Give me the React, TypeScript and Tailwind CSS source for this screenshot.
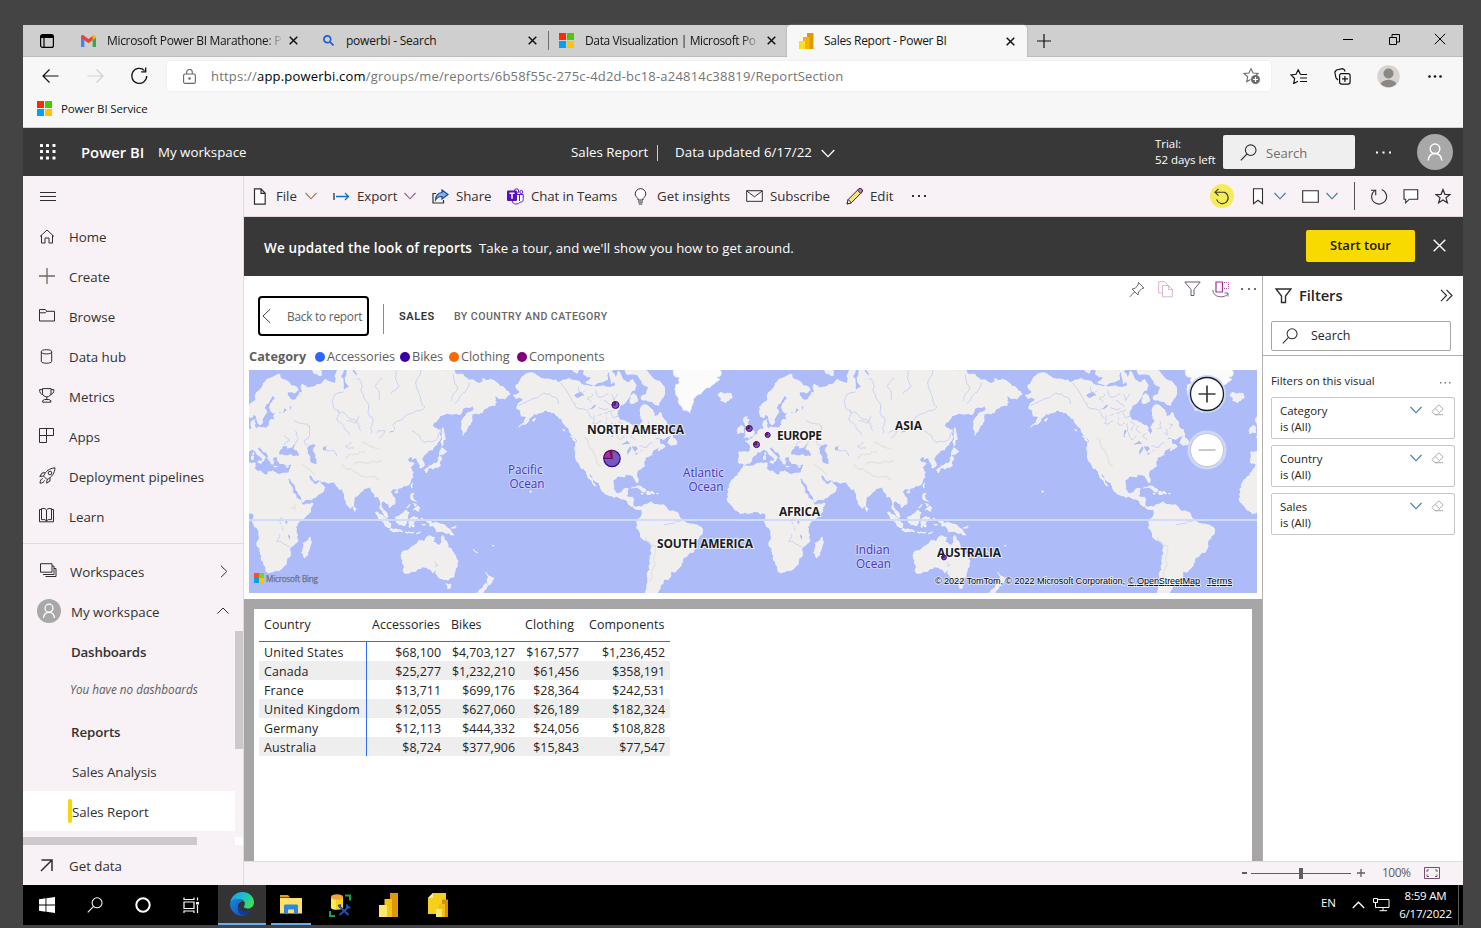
import React from "react";

type Pt = [number, number];

/* ---------- world map data: lon, lat pairs ---------- */
const AFRICA = [-5.9,35.8,-2,35.2,3,36.8,10,37.3,11,36.8,10.6,35.5,10.1,34,11.2,33.2,15,32.3,15.5,31.4,19,30.3,20,31,20,32.3,23,32.7,25,31.6,29,30.9,31,31.5,32.5,31.2,32.6,30,34,27,35.5,24,37.3,21,37.2,19,38.5,18,39.5,15.5,41.2,14.5,43.2,12,43.2,11.3,44.5,10.5,47.5,11.2,51.2,11.9,51,10.4,49.5,7,48,4.3,45.8,2,42,-1,40.3,-2.6,39,-5,39.5,-7,40.5,-10.5,40.6,-15,37,-17.8,34.9,-19.9,35.5,-22,35.5,-24,32.8,-25.8,32.5,-28.5,30.5,-31,27,-33.6,24,-34,20,-34.8,18.4,-34.2,18,-32,16.5,-28.7,15,-26.5,14.4,-22.5,12,-18,11.8,-16,13.6,-12.5,13.2,-9,12.3,-6,9.5,-2.5,8.8,-0.7,9.5,1,9.8,3.2,8.6,4.8,6,4.3,4.3,6.3,1,5.9,-2,4.8,-4.5,5.2,-7.6,4.4,-10,6,-13,8.3,-13.7,9.8,-15,11,-16.7,12.4,-17.4,14.7,-16.4,16,-16.3,19,-17,21,-16,23.7,-14.8,26,-13,27.8,-10,29.5,-9.7,31.3,-8,33.3,-6.8,34.2];
const EURASIA = [-9,43.2,-8.8,41,-9.4,38.7,-8.9,37,-6.5,37,-5.5,36.1,-2,36.8,0,38.8,-0.3,39.6,1,41,3.2,42.2,3.2,43.2,6,43.1,8.8,44.4,10.2,43.8,12.3,41.7,15,40.2,16,38.8,15.7,38,17,39,17,40.4,18.5,40,16,41.8,13.6,43.6,12.4,44.7,13.5,45.7,14.5,45,16,43.5,19.3,42,19.5,40,21,38.3,21.8,36.8,23,36.5,24,38,22.8,39.3,23.5,40.2,26,40.8,26.2,39.5,26.8,38,28,36.8,30.6,36.8,32,36.1,34,36.3,36,36.8,35.8,35,34.9,32.8,34.2,31.3,32.5,31.2,32.6,29.9,34.2,27.8,34.9,29.4,35,28,37.2,25,39,22,40.5,19.8,42.7,16.5,43.4,12.7,45,12.9,49,14.2,52,15.6,55,17.5,57.8,19,59.8,22.4,58.5,23.7,56.3,25,56.3,26.2,54,24.2,51.6,24.3,51.3,26,50.2,25.7,50,26.7,48.3,29,48.5,30,50,30.2,51.5,27.9,54,26.6,56.8,27,57.5,25.7,61.5,25.1,66.6,25.2,67.5,23.8,70,22.5,69,22.2,70.3,20.8,72.5,21.3,72.8,19,73.5,16,74.8,13,76.3,9.8,77.5,8.1,78.2,9,79.8,10.3,80.2,13.3,80.2,15.5,82.3,16.7,85,19.5,87,21.4,90,22,91.8,22.4,92.3,20.7,94.3,18.5,94.4,16,96,16.2,97.6,16.5,98.6,13,98.5,10,98.3,8,100.3,6.2,101.5,2.8,103.5,1.3,103.4,4,102.2,6.2,100.4,7.3,99.3,9.3,100,12.5,100.8,13.4,102.3,12.2,104.8,10.4,104.9,8.7,106.7,10.4,109.2,11.8,109,13.5,107.3,16.7,105.8,19,106.7,20.7,108.3,21.6,110,21.3,110.5,20.4,110.5,21.3,113.5,22.2,116.7,23.3,119.5,25.5,121.8,29,121,30.6,121.8,31.7,120.5,34,119.3,35,122.4,37,120.8,37.8,118.8,37.5,117.7,39,121,40.8,121.3,39,124.3,40,125,38,126.5,36.5,126.4,34.5,129.2,35.2,129.4,37,127.5,39.5,130,42,132,43.2,135.5,44.2,138.5,46.8,140.4,49,140.5,52,141.2,53.2,137.5,54,135.3,54.8,139,57.5,143,59.3,149,59.5,155,59.4,157,61.6,160.3,61.8,164,62.5,163.5,60.5,160,60,157,58,155.7,56.8,155.7,54,156.7,51,158.5,52.5,160,54.5,162,55.5,163,57.8,163,59.5,166,60,170.3,60,173,61.5,177.5,62.5,179.3,62.4,179.5,64.5,178,66,181,65,186,64.5,190,66,187,67,182,68.5,180,69,176,69.8,170.5,70,170,69,161,69.6,160,70,152,71,150,72,140,72.5,140,76,100,78,85,74,80,73.5,80.5,72.2,82,70.5,79,72,75,72.8,74.5,69,77,68,73,67,72.5,69,72.7,72,70,73,66.8,70.5,67.5,68.7,65,69,60.5,69.8,54,68.5,48,67.6,46.2,68.2,43.5,68.6,44,66.2,42,66.5,40,65,37,64,34.9,64.5,33,66.7,38,66.2,41,67,40,67.8,33.5,69.4,30,69.7,28,71,23,70.3,18,69.3,14.5,67.3,11,64.7,9,63.5,5.3,62,5.2,60,5.8,58.7,8,58.1,10.5,59.2,11.3,58.8,12.7,56,14.2,55.5,16,56.5,16.8,58.5,18.8,60,17.2,61.5,18,62.8,21.5,64.4,22.3,65.7,25,65,21.5,63,21.4,61,23,59.9,28.5,60.5,29.5,59.9,24,59.4,23.7,58.5,24.3,57.3,21.7,57.5,21,55.5,19.5,54.4,16,54.3,12.5,54.4,11,54,10.8,56,10.5,57.6,8.3,57,8.4,54.5,8,53.7,5,53.3,4,51.8,1.7,50.8,0,49.5,-1.7,49.6,-1.5,48.6,-4.7,48.5,-2.5,47.3,-1.2,46,-1.4,43.5];
const N_AMERICA = [-168,65.6,-163,66.5,-166,68.4,-163,69.5,-156.5,71.3,-150,70.5,-141,69.7,-136,69,-129,70,-124,69.5,-115,68.2,-108,68,-102,67.8,-96,68.2,-94,71.8,-90,69.5,-86,69,-84,69.8,-81.5,68.2,-85,66.5,-88,64.2,-93,62,-94.7,59,-92.5,57.2,-88,56.5,-82.5,55.2,-82,53,-80,51.3,-79,52,-79.5,54.6,-76.6,57.2,-78.5,59,-77.5,62.3,-73,62.3,-70,61,-69,58.8,-66,58.8,-64.5,60.2,-62,57.5,-60,55,-56.5,53.5,-56,52,-60,50.2,-66.5,50.2,-69,48.5,-65,49.2,-64.5,47,-61,45.8,-63,44.7,-66,43.6,-65,45.3,-67.5,44.8,-70,43.6,-70.8,42.2,-70,41.6,-74,40.6,-75.3,38.5,-76,37,-75.6,35.3,-78,33.9,-81,32,-81.4,30.2,-80.1,26.8,-80.5,25.2,-81.8,26.2,-82.7,28,-84,30,-87,30.4,-89.5,30.2,-89.3,29.1,-91.5,29.4,-94.5,29.5,-97.3,27.5,-97.6,24,-97.4,21.5,-96,19,-94,18.1,-91.5,18.6,-90.4,21,-87,21.5,-87.6,19,-88.5,16,-84,15.8,-83.3,14.5,-83.7,11,-82,9,-79.6,9.6,-77.3,8.6,-78,7.6,-80.3,7.3,-82.8,8.2,-85.6,10,-87.5,13,-92,14.5,-94.5,16.2,-99,16.7,-103.5,18.3,-105.6,20.5,-106.5,23,-109.3,26,-112.4,29.5,-114.7,31.7,-113,28.5,-110.3,24.2,-109.6,23.1,-112.2,25,-114.5,27.8,-116,30.3,-117.3,33,-120.5,34.5,-122.4,37.5,-124.2,40.4,-124.2,43.5,-124.2,47.5,-122.5,48.3,-125,50.2,-128,52.3,-130.5,54.6,-133.5,57.8,-137,58.8,-141,60,-146,60.8,-149,60,-152,59.2,-151,61.2,-154,59,-158.5,56,-164,54.6,-160,56.2,-157.5,58.7,-162,58.7,-165.5,61.5,-164.5,63,-161,63.8,-161,64.8,-166,64.6];
const S_AMERICA = [-77.3,8.6,-75.5,10.7,-73,11.3,-71.6,12.4,-70,12,-68,10.6,-64,10.5,-62,10.6,-60,8.5,-57,6,-54,5.8,-51.5,4.3,-50,1,-48,-0.8,-44.5,-2.6,-41,-2.9,-37.5,-4.5,-35.2,-5.6,-34.9,-8,-37.2,-11.5,-39,-14,-39.2,-17.8,-41,-22,-44.5,-23.1,-48.2,-25.6,-48.8,-28.5,-51.5,-31.8,-54,-34.5,-57.5,-34.6,-57,-36.5,-59,-38.7,-62.2,-39,-62.5,-40.8,-65,-41,-64.5,-43,-67,-45.8,-66,-48,-68,-51,-74,-51,-75.5,-46.5,-74,-42,-73.3,-38,-71.6,-33,-71.5,-29,-70.3,-23,-70.3,-18.5,-76,-14,-79,-8.2,-81.2,-5.6,-80.2,-3.3,-81,-2.2,-80,0.7,-78,2.3,-77.3,4.3,-77.5,6.8];
const GREENLAND = [-43.5,60,-48.5,60.8,-50.5,62.5,-52,65,-53.7,66.8,-53.5,68.5,-51,69,-51,70.2,-54.5,70.6,-55,72,-58,74,-60,76,-20,76,-20,73,-22,72.3,-22.5,70.5,-25,70.3,-22.5,69.8,-27,68.6,-33,67.3,-36,65.9,-39.5,65.4,-41,63.5,-42.6,61.8];
const AUSTRALIA = [114,-22,113.5,-26,115.7,-31.5,115,-34.2,118,-35,123.5,-33.9,126,-32.3,131,-31.5,134,-33,135.6,-34.9,137.8,-32.7,138,-35.6,140.5,-38,144,-38.5,146.4,-39,150,-37.4,151.2,-34,153,-31,153.3,-27.5,150.8,-23.5,148.8,-20.2,146,-18.8,145.4,-15,143.7,-14.2,142.5,-10.8,141.6,-13,140.8,-17.4,139,-17.3,135.5,-15,136.8,-12.2,132.5,-11.3,130.7,-12.5,129.5,-15,126,-14,123.7,-17,122,-18.2,119,-20];
const ISLANDS: number[][] = [
  [-5.5,50.1,1,51,1.6,52.7,0,53.2,-1.5,55,-3,56,-2,57.5,-4,57.8,-3.2,58.6,-5,58.5,-6,57,-5,55.5,-3,54.9,-3,53.5,-4.5,53.2,-4.5,52,-5,51.7,-3,51.4],
  [-6,52.2,-10,51.7,-10,54,-7.5,55.2,-5.7,54.5],
  [-22,64,-18.5,63.4,-14,64.8,-15,66.2,-20,66,-22.5,66.4,-24,65.5,-22,65],
  [49.3,-12,50.5,-15.5,49.3,-18,47.5,-24,45,-25.5,43.3,-22.5,44.4,-19.5,44.3,-16.3,47,-15],
  [79.8,9.7,81.8,7.5,80.6,6,79.8,7.5],
  [95.3,5.6,98,4.2,101,2,104,-1,106,-3,105.8,-5.8,102,-4,99,0,97,3],
  [105.2,-6.7,108.5,-6.6,112.6,-6.8,114.5,-8.4,110,-8.2,106.5,-7.4],
  [116,-8.4,119,-8.4,122.5,-8.5,120,-9,117,-9],[124,-9.5,127,-8.5,125,-9.7],[127.8,-3,130.5,-3.2,129,-3.6],[127.5,1.5,128.5,1,128,-0.5],
  [109,1.8,111.5,2.5,115,5.2,117,7,119,5.2,117.8,3,117.5,0.8,116,-3.8,112,-3.4,110,-1.6],
  [119,-1,120,1.2,125,1.6,120.5,0.5,121,-1,123,-1,121.5,-2,122.5,-4.8,121,-4.5,120.4,-3,119.5,-5.4],
  [120.5,18.4,122.2,18.4,121.6,15.8,124,13,121,13.7,120,16],
  [125,10,126.4,8,125.5,6,123.5,7.5,122,7],[122,11.5,124,11,123,9.5],[117.2,8.4,119.5,11,118.5,10],
  [131,-1,134,-0.8,135,-3.3,138,-1.6,142,-3,146,-5.6,150.5,-10.4,146.5,-9,143,-8.2,138,-8.3,137.5,-5.3,133,-4,134,-2.5],
  [148.3,-5.7,152,-4.2,151,-5.8],
  [144.8,-40.8,148.2,-41,147.8,-43.2,146,-43.4],
  [172.8,-34.5,175.5,-36.8,178.4,-37.8,176.5,-40.5,175,-41.5,173.8,-39.2,174.7,-37.5],
  [172.7,-40.6,174.2,-41.8,172.5,-43.8,170.5,-46,168,-46.5,166.5,-45.8,169,-43.8,171.3,-42],
  [129.7,33,131,34.2,134,35.6,136.7,37,139.5,38.5,140.2,41.2,141.8,39.8,140.9,36,138.5,34.7,135.7,33.6,134,34.5,132,33.8,131,31.4],
  [140.2,41.8,141.7,45.3,145.2,43.5,143,42],
  [142,46,143,49,144.5,49.3,143,52.5,142.7,54.3,142,52,142,49],
  [120.2,23,121.5,25.2,121,22],
  [108.7,19.3,110.8,20,109.8,18.4],
  [12.5,38,15.6,38.2,15,36.8],
  [8.3,39,8.3,41,9.7,41,9.5,39.2],[8.7,41.6,9.4,43,9.5,41.6],
  [23.6,35.4,26.3,35.2,24.5,35],[32.4,35,34.4,35.6,33.5,34.7],
  [52,71.2,57,70.7,55.5,73.5,52,73],
  [-84.8,21.9,-81,23.1,-77,21.8,-74.3,20.2,-77.6,19.9,-79,21.4,-82,22.5],
  [-74.3,18.4,-73,19.9,-69.8,19.7,-68.5,18.4,-71.5,17.8],
  [-78.2,18.4,-76.3,18.1,-77.3,17.8],[-67.2,18.4,-65.7,18.3,-66.5,18],
  [-59.2,47.7,-57.5,50.2,-55.7,51.6,-55.5,49.7,-53,48,-53.6,46.7],
  [-128,50.7,-125,49.7,-123.5,48.4,-125.5,48.8],
  [-132.5,53.8,-131.8,52.8,-133,53.4],
  [-61.5,66.7,-65,63.5,-65.5,62.5,-71.5,63.8,-78,64.5,-74,66,-73,68,-79,70,-88,71,-90,73.5,-80,74,-74,71.8,-67.5,69.5],
  [-86,64.2,-83,66,-80.5,63.8,-85,63],
  [-117,69,-105,69.2,-101.5,69.8,-105,73,-115,73.3,-118.5,71,-113,70.3],
  [-126,72,-123,71.2,-118,73,-124,74.5],
  [-99,68.8,-96,70,-99,71.5,-97,74,-102,73,-100,70.5],
  [-154.5,57.3,-152.3,58,-153.5,56.8],
  [-64.2,49.8,-62,49.2,-63,49.5],
  [-156,20.2,-155,19.6,-155.8,19],
  [164.2,-20.2,167,-22.3,165.2,-21.5],
  [178,-17.4,178.7,-17.9,177.5,-18],
];
const WATERS: number[][] = [
  [28,41.5,28,43.5,30.5,46,33,46,33.5,44.6,36.5,45.3,39,47,37.5,44.7,41.5,42,41,41,38,41,35,42,31.5,41.3],
  [47,45,51,46.8,53,46.5,51,44.5,53,41.5,53.8,39,54,37,50,37.3,49,39,49.5,40.5,47.5,43],
  [58.5,45.5,61,46.5,61,44,58.8,43.8],
  [104,51.5,107,52.4,109.7,55.6,108,53],
  [-92,46.8,-88,48.7,-84.7,46.8,-88,46.9],
  [-87.8,42,-87,44.5,-85,46,-86.2,43,-87,41.7],
  [-84,46,-81,45.8,-80,44.6,-82,43.2,-83.5,44.5],
  [-83,41.8,-79,42.8,-81,41.8],[-79.5,43.3,-76.4,44,-78,43.6],
  [-99,50.5,-97,53.5,-98.5,53,-97.5,50.5],
  [-117,61.3,-109.5,62.8,-113,61.2],[-125,65.5,-121,66.6,-118,65.5,-123,64.8],
  [31.8,0,34,0.3,33.5,-2.5,32,-2.2],[29.2,-4,30,-6,31,-8.5,29.6,-6],[34,-10,35,-14,34.3,-12.5],
  [30.5,60,33,61,31,61.5],[35,61,36,62.3,34.7,62],
  [-102,57,-102.6,58.5,-102,58],[-109,59,-105,59.4,-107,59.1],
];
const RIVERS: number[][] = [
  [73,66.5,66,65,67,61,70,60,75,59,82,57,85,53],
  [69,61,68,58,73,55,77,51],
  [82,70,86,68,87,65,90,60,93,56,92,52],
  [127,72,124,68,127,64,130,62,122,60,115,58,107,55],
  [141,53,135,48,130,48,127,50,121,53],
  [48,46,45,48.5,49,52,49,55,44,56,38,57],
  [39,47,41,49,39,53],[31,46.5,35,48.5,31,51],
  [150,71,153,68,149,64],[161,69,156,66,151,63],
  [-135,69,-129,66,-124,62,-117,61,-112,58],
  [-164,62.5,-157,64,-150,65.2,-142,66,-136,63],
  [28,-10,26,-15,30,-16,35,-18.5],[29,-3,28,-1,30,2],
  [-50,-0.5,-55,-2.3,-62,-3],
  [137,-28,139,-30,137,-31],
  [-94,66,-97,64,-99,66],[-93,60,-97,58,-99,60],[-101,66,-108,65,-110,67],[-106,57,-112,56,-111,59],[-90,51,-93,49,-95,52,-96,56],
  [-104,64,-101,63,-98,62],[-112,66,-116,64.5,-113,63.5],[-98,56,-101,55,-103,56.5],[-87,52,-90,53.5,-88,55],
  [-108,62,-104,61,-101,61.5],[-117,67,-120,66,-122,68],[-97,61,-100,60.5,-104,60],[-93,53,-91,55.5,-94,57],[-82,49,-85,50.5,-83,52],
  [-75,54,-72,54,-73,57],[-79,46,-74,45.5,-70,47.5],[-66,54,-64,55.5,-67,56],[-70,52,-68,51,-69,54],
  [80,45,74,46,78,48],[60,44,66,44,68,41],[75,57,81,56,84,59],[96,52,102,53,98,50],
  [110,72,112,68,106,66],[100,70,95,68,98,64],
];
const RIDGES: number[][] = [
  [71,37,78,34,83,31,88,29,95,29.5,98,27],[80,36,87,37,93,38,100,38],[74,40,81,42,88,43],[86,48,92,46,98,45],
  [-72,-40,-70,-33,-69,-25,-68,-18,-75,-12],[-118,50,-114,45,-110,40,-106,35],[36,9,39,7,38,12],[44,37,48,34,53,30],
];

const LON = 512 / 360;
/* Web-mercator projection into map-panel pixels. */
function project(lon: number, lat: number): Pt {
  const r = (lat * Math.PI) / 180;
  return [503 + lon * LON, 150 - 81.49 * Math.log(Math.tan(Math.PI / 4 + r / 2))];
}
function toPoints(flat: number[]): Pt[] {
  const out: Pt[] = [];
  for (let i = 0; i < flat.length; i += 2) out.push(project(flat[i], flat[i + 1]));
  return out;
}
function noise(x: number, y: number) {
  const s = Math.sin(x * 12.9898 + y * 78.233) * 43758.5453;
  return s - Math.floor(s) - 0.5;
}
/* Adds small coastline irregularity by midpoint displacement. */
function roughen(pts: Pt[], closed: boolean): Pt[] {
  const out: Pt[] = [];
  const n = closed ? pts.length : pts.length - 1;
  for (let i = 0; i < n; i++) {
    const a = pts[i];
    const b = pts[(i + 1) % pts.length];
    const dx = b[0] - a[0];
    const dy = b[1] - a[1];
    const len = Math.hypot(dx, dy);
    out.push(a);
    if (len > 2 && len < 30) {
      const k = noise(a[0], b[1]) * 0.42;
      out.push([a[0] + dx / 2 - dy * k, a[1] + dy / 2 + dx * k]);
    }
  }
  if (!closed) out.push(pts[pts.length - 1]);
  return out;
}
function path(flat: number[], closed = true) {
  let pts = roughen(toPoints(flat), closed);
  pts = roughen(pts, closed);
  return "M" + pts.map((p) => p[0].toFixed(1) + " " + p[1].toFixed(1)).join("L") + (closed ? "Z" : "");
}
const LAND_D = [AFRICA, EURASIA, N_AMERICA, S_AMERICA, AUSTRALIA, ...ISLANDS].map((p) => path(p)).join("");
const ICE_D = path(GREENLAND);
const WATER_D = WATERS.map((p) => path(p)).join("");
const RIVER_D = RIVERS.map((p) => path(p, false)).join("");
const RIDGE_D = RIDGES.map((p) => path(p, false)).join("");

function Pie({ x, y, r }: { x: number; y: number; r: number }) {
  const at = (deg: number) => {
    const t = (deg * Math.PI) / 180;
    return `${(x + r * Math.sin(t)).toFixed(2)} ${(y - r * Math.cos(t)).toFixed(2)}`;
  };
  return (
    <g stroke="#3a0a86" strokeWidth={r > 5 ? 1.2 : 1}>
      <circle cx={x} cy={y} r={r} fill="#7558c4" />
      <path d={`M${x} ${y}L${at(272)}A${r} ${r} 0 0 1 ${at(346)}Z`} fill="#ad2bab" stroke="#5a0a5e" />
      <path d={`M${x} ${y}L${at(346)}A${r} ${r} 0 0 1 ${at(358)}Z`} fill="#c8502a" stroke="#7a1030" />
    </g>
  );
}

function MapLabel({ x, y, w, children }: { x: number; y: number; w: number; children: string }) {
  return (
    <text x={x} y={y} textLength={w} className="fill-[#1c1c24] stroke-white/70 text-[12px] font-bold [paint-order:stroke]" strokeWidth={2.2}>
      {children}
    </text>
  );
}
function OceanLabel({ x, x2, y, name }: { x: number; x2: number; y: number; name: string }) {
  return (
    <text className="fill-[#4836c4] stroke-[#cdd6fb]/80 text-[11.700px] [paint-order:stroke]" strokeWidth={2}>
      <tspan x={x} y={y}>{name}</tspan>
      <tspan x={x2} y={y + 14}>Ocean</tspan>
    </text>
  );
}

function WorldMap() {
  return (
    <div className="relative h-[223px] w-[1008px] overflow-hidden">
      <svg width="1008" height="223" viewBox="0 0 1008 223" className="block">
        <rect width="1008" height="223" fill="#adbcf8" />
        {[-512, 0, 512].map((dx) => (
          <g key={dx} transform={`translate(${dx} 0)`}>
            <path d={LAND_D} fill="#f0efee" stroke="#f6f6fa" strokeWidth="0.8" />
            <path d={ICE_D} fill="#fbfbfc" stroke="#f0f3fd" strokeWidth="0.8" />
            <path d={RIDGE_D} fill="none" stroke="#e7e4e0" strokeWidth="1.600" />
            <path d={WATER_D} fill="#adbcf8" />
            <path d={RIVER_D} fill="none" stroke="#c0caf5" strokeWidth="0.8" />
          </g>
        ))}
        <rect y="149" width="1008" height="2" fill="#cfdcfb" />
        <MapLabel x={338} y={64} w={97}>NORTH AMERICA</MapLabel>
        <MapLabel x={528} y={70} w={45}>EUROPE</MapLabel>
        <MapLabel x={646} y={60} w={27}>ASIA</MapLabel>
        <MapLabel x={530} y={146} w={41}>AFRICA</MapLabel>
        <MapLabel x={408} y={178} w={96}>SOUTH AMERICA</MapLabel>
        <MapLabel x={688} y={187} w={64}>AUSTRALIA</MapLabel>
        <OceanLabel x={259} x2={260.500} y={104} name="Pacific" />
        <OceanLabel x={434} x2={439.500} y={107} name="Atlantic" />
        <OceanLabel x={606.500} x2={607} y={184} name="Indian" />
        <Pie x={363} y={88.500} r={8.200} />
        <Pie x={366.500} y={35} r={3.500} />
        <Pie x={500.300} y={58.500} r={3} />
        <Pie x={518.700} y={65} r={2.500} />
        <Pie x={507.500} y={74.600} r={3} />
        <Pie x={695} y={187.500} r={2.400} />
        <rect x="5" y="203" width="5" height="5" fill="#f65314" />
        <rect x="10" y="203" width="5" height="5" fill="#6fd531" />
        <rect x="5" y="208" width="5" height="5" fill="#00a1f1" />
        <rect x="10" y="208" width="5" height="5" fill="#ffc400" />
        <text x="17" y="211.500" textLength="52" className="fill-[#6f7179] text-[8.200px]" stroke="#6f7179" strokeWidth="0.25">Microsoft Bing</text>
        <g className="fill-black stroke-white/70 font-['Liberation_Sans',Arial,sans-serif] text-[9.200px] [paint-order:stroke]" strokeWidth={1.5}>
          <text x="686" y="214" textLength="190">© 2022 TomTom, © 2022 Microsoft Corporation,</text>
          <text x="879" y="214" textLength="72" textDecoration="underline">© OpenStreetMap</text>
          <text x="958" y="214" textLength="25" textDecoration="underline">Terms</text>
        </g>
        <circle cx="958" cy="24" r="19" fill="#ccd8fb" />
        <circle cx="958" cy="24" r="16.500" fill="#fff" stroke="#1b1b1b" strokeWidth="1.300" />
        <path d="M949.500 24h17M958 15.500v17" stroke="#3b3b3b" strokeWidth="1.700" />
        <circle cx="958" cy="80" r="19.500" fill="#ccd8fb" />
        <circle cx="958" cy="80" r="16.500" fill="#fff" stroke="#c8c4c4" strokeWidth="1" />
        <path d="M949.500 80h17" stroke="#b9b7b7" strokeWidth="1.500" />
      </svg>
    </div>
  );
}

/* ---------- icons ---------- */
function Icon({ w, h, c = "#2f2e2d", sw = 1, children, className = "" }: { w: number; h: number; c?: string; sw?: number; children: React.ReactNode; className?: string }) {
  return (
    <svg width={w} height={h} viewBox={`0 0 ${w} ${h}`} fill="none" stroke={c} strokeWidth={sw} className={"block shrink-0 " + className}>
      {children}
    </svg>
  );
}
const ChevronDown = ({ c = "#6b6360" }: { c?: string }) => (
  <Icon w={12} h={8} c={c} sw={1.100}><path d="M.5 1 6 6.800 11.500 1" /></Icon>
);
const MsLogo = () => (
  <svg width="15" height="15" viewBox="0 0 15 15" className="block shrink-0">
    <path fill="#fe2a00" d="M0 0h7v7H0z" /><path fill="#4dc900" d="M8 0h7v7H8z" />
    <path fill="#00a2f8" d="M0 8h7v7H0z" /><path fill="#ffc400" d="M8 8h7v7H8z" />
  </svg>
);
const CloseX = () => <Icon w={9} h={9} c="#111" sw={1.500}><path d="M.7.7l7.600 7.600M8.300.7.7 8.300" /></Icon>;
const Person = ({ small = false }: { small?: boolean }) => (
  <svg width={small ? 24 : 36} height={small ? 24 : 36} viewBox={small ? "0 0 24 24" : "0 0 36 36"} className="block shrink-0">
    {small ? (
      <><circle cx="12" cy="12" r="12" fill="#a8a8a8" /><g fill="none" stroke="#fff" strokeWidth="1.200"><circle cx="12" cy="9.200" r="4" /><path d="M6.500 19c.3-3.600 2.400-5.700 5.500-5.700s5.200 2.100 5.500 5.700" /></g></>
    ) : (
      <><circle cx="18" cy="18" r="18" fill="#a8a8a8" /><g fill="none" stroke="#fff" strokeWidth="1.500"><circle cx="18" cy="14.800" r="4.800" /><path d="M11.200 26.500c.5-4.500 3.200-7 6.800-7s6.300 2.500 6.800 7" /></g></>
    )}
  </svg>
);
const SearchGlass = ({ c = "#2f2e2d", s = 17 }: { c?: string; s?: number }) => (
  <svg width={s} height={s} viewBox="0 0 17 17" fill="none" stroke={c} strokeWidth="1.100" className="block shrink-0">
    <circle cx="10.700" cy="6.200" r="5.300" /><path d="M7 10 .8 16.300" />
  </svg>
);

function TabBar() {
  return (
    <div className="flex h-8 items-stretch border-b border-[#bdbdbd] bg-[#cfcfcf] text-[12px] tracking-[-0.3px] text-[#151515]">
      <div className="flex w-[58px] items-center pl-[17px]">
        <Icon w={14} h={14} c="#000" sw={1.200}><rect x=".6" y=".6" width="12.800" height="12.800" rx="2" /><path d="M1 2.500h12" strokeWidth="3" /><path d="M4 4v9.500" /></Icon>
      </div>
      <div className="flex w-[236px] items-center">
        <svg width="15" height="12" viewBox="0 0 15 12" className="shrink-0"><path fill="#4285f4" d="M0 2v10h3.400V4z" /><path fill="#34a853" d="M11.600 4v8H15V2z" /><path fill="#ea4335" d="M0 2.600V1.500C0 0 1.800-.4 2.700.4L7.500 4l4.800-3.600V4.700L7.500 8.300 0 2.700z" /><path fill="#fbbc04" d="M11.600.9C12.800-.4 15 0 15 1.700v.9l-3.400 2.600z" /></svg>
        <span className="ml-[11px] w-[175px] whitespace-nowrap tracking-[-0.330px] [mask-image:linear-gradient(90deg,#000_90%,transparent_101%)]">Microsoft Power BI Marathone: P</span>
        <span className="ml-[7px]"><CloseX /></span>
      </div>
      <div className="flex w-[231px] items-center pl-[6px]">
        <Icon w={11} h={11} c="#1f5fd0" sw={1.700}><circle cx="4.300" cy="4.300" r="3.400" /><path d="M6.900 6.900l3.600 3.600" /></Icon>
        <span className="ml-[12px] w-[182px] whitespace-nowrap tracking-[-0.230px]">powerbi - Search</span>
        <CloseX />
      </div>
      <div className="my-[6px] w-px bg-[#6e6e6e]" />
      <div className="flex w-[238px] items-center pl-[10px]">
        <MsLogo />
        <span className="ml-[11px] w-[174px] whitespace-nowrap tracking-[-0.370px] [mask-image:linear-gradient(90deg,#000_90%,transparent_101%)]">Data Visualization | Microsoft Po</span>
        <span className="ml-[8px]"><CloseX /></span>
      </div>
      <div className="-mb-px flex w-[240px] items-center rounded-t-[4px] bg-[#f7f7f7] pl-[12px] shadow-[0_0_2px_#999]">
        <svg width="15" height="16" viewBox="0 0 15 16" className="shrink-0"><path fill="#e09a05" d="M8 0h6.500v16H8z" /><path fill="#f4b400" d="M4 4h6.500v12H4z" /><path fill="#fbdc2a" d="M0 8h6v8H0z" /></svg>
        <span className="ml-[10px] w-[182px] whitespace-nowrap">Sales Report - Power BI</span>
        <CloseX />
      </div>
      <div className="flex w-[316px] items-center pl-[10px]"><Icon w={14} h={14} c="#111" sw={1.200}><path d="M7 0v14M0 7h14" /></Icon></div>
      <div className="flex flex-1 items-center pb-[3px]">
        <Icon w={10} h={10} c="#000"><path d="M0 5.500h10" /></Icon>
        <Icon w={11} h={11} c="#000" className="ml-[36px]"><path d="M.5 3.500h7v7h-7zM3 3V.500h7.500V8H8" /></Icon>
        <Icon w={12} h={12} c="#000" className="ml-[34px]"><path d="M.8.8l10.400 10.400M11.200.8.8 11.200" /></Icon>
      </div>
    </div>
  );
}

function AddressBar() {
  return (
    <div className="flex h-9 items-center bg-[#f7f7f7] pt-[2px]">
      <Icon w={17} h={14} c="#111" className="ml-[19px]" sw={1.200}><path d="M16.500 7H1M7.500.5 1 7l6.500 6.500" /></Icon>
      <Icon w={17} h={14} c="#cfcfcf" className="ml-[28px]" sw={1.200}><path d="M.5 7H16M9.500.5 16 7l-6.500 6.500" /></Icon>
      <Icon w={18} h={18} c="#111" className="ml-[26px]" sw={1.300}><path d="M14.500 3.600A7.500 7.500 0 1 0 16.700 9M15.700.5v4.300h-4.500" /></Icon>
      <div className="ml-[19px] flex h-[30px] w-[1104px] items-center rounded-[4px] bg-white shadow-[0_0_2px_#e6dfe2]">
        <Icon w={13} h={15} c="#666" className="ml-[16px]" sw={1.100}><rect x=".6" y="5" width="11.800" height="9.400" rx="1.500" /><path d="M3.700 5V3.300a2.800 2.800 0 0 1 5.600 0V5" /><circle cx="6.500" cy="9.600" r=".7" fill="#666" /></Icon>
        <span className="ml-[15px] mt-px w-[1032px] whitespace-nowrap text-[13px] tracking-[0.200px] text-[#757575]">https://<span className="text-black">app.powerbi.com</span>/groups/me/reports/6b58f55c-275c-4d2d-bc18-a24814c38819/ReportSection</span>
        <svg width="18" height="18" viewBox="0 0 18 18" fill="none" stroke="#6b6b6b" className="shrink-0"><path d="M8 1.500 10 6l5 .5-2 2M8 1.500 6 6l-5 .5 3.700 3.300-1 4.900L7.500 12.500" strokeWidth="1.100" /><circle cx="12.500" cy="12.500" r="4.500" fill="#6b6b6b" stroke="none" /><path d="M10 12.500h5M12.500 10v5" stroke="#fff" strokeWidth="1.200" /></svg>
      </div>
      <Icon w={17} h={15} c="#111" className="ml-[19px]" sw={1.200}><path d="M10.500 5.500 8.200.800 6 5.300l-5 .7 3.600 3.500-.9 5L8 12.300M10.500 5.500H17M10 9h7M10 12.500h7" /></Icon>
      <Icon w={17} h={17} c="#111" className="ml-[27px]" sw={1.200}><rect x="5.600" y="5.600" width="10.500" height="10.500" rx="2" /><path d="M10.900 8v6M8 10.900h6M4 12 2 10 .800 4 2.500 2l6-1.400L10.500 2l.5 1.500" /></Icon>
      <svg width="23" height="23" viewBox="0 0 23 23" className="ml-[26px] block shrink-0"><circle cx="11.500" cy="11.500" r="11.200" fill="#d6d3d0" /><circle cx="11.500" cy="8.500" r="5" fill="#8c8884" /><path d="M3.500 18.800c2-3 5-4 8-4s6 1 8 4a11 11 0 0 1-16 0z" fill="#8c8884" /></svg>
      <svg width="14" height="3" className="ml-[28px] block"><g fill="#111"><circle cx="1.500" cy="1.500" r="1.300" /><circle cx="7" cy="1.500" r="1.300" /><circle cx="12.500" cy="1.500" r="1.300" /></g></svg>
    </div>
  );
}

function Header() {
  return (
    <div className="flex h-12 shrink-0 items-center bg-[#383838] text-[13.300px] text-white">
      <svg width="16" height="16" viewBox="0 0 16 16" fill="#fff" className="ml-[17px] block shrink-0">
        {[0, 6, 12.500].map((y) => [0, 6, 12.500].map((x) => <rect key={`${x}-${y}`} x={x} y={y} width="3" height="3" rx=".6" />))}
      </svg>
      <span className="ml-[25px] mt-px w-[77px] whitespace-nowrap text-[14.800px] font-semibold">Power BI</span>
      <span className="mt-px w-[413px] whitespace-nowrap">My workspace</span>
      <span className="mt-px w-[86px] whitespace-nowrap">Sales Report</span>
      <span className="mt-[2px] h-4 w-px bg-[#d8cbb8]" />
      <span className="ml-[17px] mt-px w-[146px] whitespace-nowrap tracking-[0.050px]">Data updated 6/17/22</span>
      <Icon w={14} h={9} c="#fff" sw={1.300} className="mt-[2px]"><path d="M.7 1 7 7.600 13.300 1" /></Icon>
      <span className="ml-[320px] w-[68px] whitespace-nowrap text-[11.500px] leading-4 tracking-[-0.05px]">Trial:<br />52 days left</span>
      <div className="flex h-[34px] w-[132px] shrink-0 items-center rounded-[2px] bg-[#f0efef] pl-[17px] text-[13px] text-[#6f6d6b]">
        <SearchGlass /><span className="ml-[9px] mt-[3px]">Search</span>
      </div>
      <svg width="15" height="3" className="ml-[21px] block shrink-0" fill="#fff"><rect y=".5" width="2" height="2" /><rect x="6.500" y=".5" width="2" height="2" /><rect x="13" y=".5" width="2" height="2" /></svg>
      <span className="ml-[26px]"><Person /></span>
    </div>
  );
}

const cmd = "pt-px tracking-[-0.050px]";
function CommandBar() {
  return (
    <div className="grid h-[41px] grid-cols-[24px_29px_28px_24px_47px_28px_24px_51px_24px_103px_23px_89px_24px_76px_24px_41px_299px_42px_22px_28px_24px_28px_16px_33px_32px_20px] items-center whitespace-nowrap border-b border-[#e3d9dd] bg-[#f8f1f6] pl-[8px] text-[13.300px] text-[#323130]">
      <Icon w={14} h={17} sw={1.200}><path d="M2.500.8h6.500L13.200 5.300v10.900H2.500zM9 .8v4.500h4.200" fill="#fff" /></Icon>
      <span className={cmd}>File</span>
      <ChevronDown c="#a8763f" />
      <Icon w={17} h={9} c="#0b76d1" sw={1.300}><path d="M1 1v7" stroke="#323130" /><path d="M3 4.500h12.500M12 1l3.500 3.500L12 8" /></Icon>
      <span className={cmd}>Export</span>
      <ChevronDown c="#8d5f98" />
      <Icon w={17} h={15} c="#174a9c" sw={1.200}><path d="M4 4.500H1V14h10.500v-3" stroke="#323130" /><path d="M10 .900 16 5.500 10 10V7.500C7 7.300 5 8.500 3.500 11c0-4 2.500-7.300 6.500-7.500z" fill="#7fb2ea" /></Icon>
      <span className={cmd}>Share</span>
      <svg width="17" height="17" viewBox="0 0 17 17" className="block"><circle cx="9.500" cy="3" r="2.200" fill="none" stroke="#5a1fc0" /><circle cx="14.300" cy="4" r="1.500" fill="none" stroke="#5a1fc0" /><path d="M6 6.500h10.200v5c0 2-1.500 3-3 2.500-.7 1.500-2.700 2-4.500 2-2 0-3.500-1.500-3.500-3z" fill="#fff" stroke="#5a1fc0" /><path d="M12.500 7v6" stroke="#5a1fc0" /><rect y="2.500" width="10" height="10.500" rx="1" fill="#5b10bd" /><path d="M2.500 5.300h5M5 5.300v5.500" stroke="#fff" strokeWidth="1.500" /></svg>
      <span className="pt-px tracking-[-0.130px]">Chat in Teams</span>
      <Icon w={13} h={17}><path d="M4 12V10.500C2.500 9 1.200 7.800 1.200 5.800A5.200 5.200 0 0 1 6.500.7a5.200 5.200 0 0 1 5.300 5.100C11.800 7.800 10.500 9 9 10.500V12zM4 14h5M4.800 16h3.500" fill="#fff" /></Icon>
      <span className="pt-px">Get insights</span>
      <Icon w={17} h={12}><path d="M.7.7h15.600v10.600H.7zM.7.9 8.500 6.800l7.800-5.900" fill="#fff" /></Icon>
      <span className="pt-px tracking-[-0.100px]">Subscribe</span>
      <Icon w={17} h={17}><path d="M1 16l1.200-4.500L12.500 1.200a2.200 2.200 0 0 1 3.200 3.200L5.300 14.800z" fill="#f6e27c" /><path d="M11.500 2.200l1-1a2.200 2.200 0 0 1 3.200 3.200l-1 1z" fill="#d86bd0" /><path d="M1 16l1.200-4.500 3.100 3.300z" fill="#fff" /></Icon>
      <span className={cmd}>Edit</span>
      <svg width="16" height="2" fill="#323130" className="block"><rect x="1" width="2" height="2" /><rect x="7" width="2" height="2" /><rect x="13" width="2" height="2" /></svg>
      <svg width="24" height="24" viewBox="0 0 24 24" fill="none" className="block"><circle cx="12" cy="12" r="12" fill="#f4ec5a" /><path d="M5 8.200h9.300a5.900 5.900 0 1 1-7.700 7.200M8.500 4.800 5 8.200l3.500 3.400" stroke="#3a3a28" strokeWidth="1.100" /></svg>
      <Icon w={12} h={17} sw={1.100}><path d="M1.500.7h9v15L6 12.200 1.500 15.700z" fill="#fff" /></Icon>
      <ChevronDown c="#4f6f9c" />
      <Icon w={17} h={13} sw={1.100}><path d="M.7.7h15.600v11.600H.7z" fill="#fff" /></Icon>
      <ChevronDown c="#3f779c" />
      <span className="h-7 w-px bg-[#55504e]" />
      <Icon w={18} h={17} sw={1.100}><path d="M11.800 1.600a7.500 7.500 0 1 1-7.200 1M5.700 7.300V2.300H1" /></Icon>
      <Icon w={16} h={15} sw={1.100}><path d="M1 .8h13.700v9.400H6.300L2.700 13.800v-3.600H1z" fill="#fff" /></Icon>
      <Icon w={16} h={16} sw={1.200}><path d="M8 1.500l1.900 4.800 5.100.3-4 3.200 1.400 5-4.400-2.800-4.400 2.800 1.400-5-4-3.200 5.100-.3z" /></Icon>
    </div>
  );
}

const NAV: { label: string; icon: React.ReactNode }[] = [
  { label: "Home", icon: <Icon w={16} h={15} className="-mt-[2px]"><path d="M1 7.500 8 1l7 6.500M2.500 6.300V14H6V9h4v5h3.500V6.300" /></Icon> },
  { label: "Create", icon: <Icon w={16} h={16} c="#6f675f" sw={1.300} className="-mt-[2px]"><path d="M8 0v16M0 8h16" /></Icon> },
  { label: "Browse", icon: <Icon w={16} h={13} className="-mt-[4px]"><path d="M.5.5h5.800l1.500 1.800h7.700v9.700H.5zM.5 3.800h5.800L7.800 2.300" /></Icon> },
  { label: "Data hub", icon: <Icon w={16} h={15} className="-mt-[2px]"><ellipse cx="7.500" cy="2.800" rx="5.200" ry="2.100" /><path d="M2.300 2.800v9.500c0 2.600 10.400 2.600 10.400 0V2.800" /></Icon> },
  { label: "Metrics", icon: <Icon w={16} h={15} className="-mt-[3px]"><path d="M3.500.6h8.500v4.500c0 5-8.500 5-8.500 0zM3.500 1.600H.6c0 3 1 4.600 3.300 4.900M12 1.600h2.900c0 3-1 4.600-3.300 4.900M7.800 8.900v2.600M3.600 14.200v-1.500l2-1.200h4.300l2 1.200v1.500z" /></Icon> },
  { label: "Apps", icon: <Icon w={16} h={16} className="-mt-[3px]"><path d="M.5.500h14v7h-14zM7.500.500v14h-7V7" /></Icon> },
  { label: "Deployment pipelines", icon: <Icon w={17} h={17} className="-mt-[3px]"><path d="M4.500 9C7 4 10 1.500 16 .800 15.500 6.500 13 10 8 12.500zM6.200 5.700 3 6 .800 9.500l3.700-.5M11 10.800V14l-3.300 2.200L8 12.500M3.800 11.500c-2 .5-2.500 2-2.800 4.700 2.500-.3 4-.8 4.500-2.800" /><circle cx="11" cy="6" r="1.800" /></Icon> },
  { label: "Learn", icon: <Icon w={16} h={15} className="-mt-[3px]"><path d="M7.500 2v11M2.500 1.500H.5v12.300h14V1.500h-2M2.500.6h3.500L7.500 2 9 .6h3.500v11H9.200L7.500 13 5.800 11.600H2.500z" /></Icon> },
];

function Sidebar() {
  return (
    <nav className="flex w-[221px] shrink-0 flex-col border-r border-[#e2d9dc] bg-[#f8f1f6] text-[13.300px] text-[#323130]">
      <div className="flex h-[41px] items-center pl-[17px]"><Icon w={16} h={10}><path d="M0 .5h16M0 4.500h16M0 8.500h16" /></Icon></div>
      {NAV.map((n) => (
        <div key={n.label} className="flex h-10 items-center pl-4">
          <span className="w-[30px]">{n.icon}</span>
          <span className="mt-[2px] whitespace-nowrap">{n.label}</span>
        </div>
      ))}
      <div className="mb-[8px] mt-[6px] h-px bg-[#e2d9dc]" />
      <div className="flex h-10 items-center pl-[17px]">
        <Icon w={17} h={15} className="-mt-[3px]"><path d="M.5.7h11.500v8.500H.5zM12 3h2v8.500H3M14 5.500h2v8H5.500" /></Icon>
        <span className="ml-[13px] mt-[2px] w-[150px] tracking-[-0.050px]">Workspaces</span>
        <Icon w={8} h={13} className="-mt-[2px]"><path d="M1 .8 6.800 6.500 1 12.200" /></Icon>
      </div>
      <div className="flex h-10 items-center pl-[14px]">
        <span className="-mt-[2px]"><Person small /></span>
        <span className="ml-[10px] mt-[2px] w-[146px]">My workspace</span>
        <Icon w={12} h={7} className="-mt-[3px]"><path d="M.5 6.500 6 1l5.500 5.500" /></Icon>
      </div>
      <div className="-mt-px flex">
        <div className="w-[212px] pt-px">
          <div className="flex h-10 items-center pl-12 pt-[2px] font-semibold tracking-[-0.170px]">Dashboards</div>
          <div className="flex h-9 items-center pl-[47px] text-[11.700px] italic text-[#605e5c]">You have no dashboards</div>
          <div className="mt-1 flex h-10 items-center pl-12 pt-[2px] font-semibold tracking-[-0.080px]">Reports</div>
          <div className="flex h-[39px] items-center pl-[49px] pt-[3px] tracking-[-0.050px]">Sales Analysis</div>
          <div className="flex h-10 items-center bg-white pl-[45px]"><span className="h-6 w-[4px] rounded-[2px] bg-[#f5d900]" /><span className="mt-[3px] tracking-[-0.050px]">Sales Report</span></div>
        </div>
        <div className="h-[118px] w-2 bg-[#cdc8cc]" />
      </div>
      <div className="mt-[6px] flex h-2 justify-between"><div className="w-[174px] bg-[#cdc8cc]" /><div className="w-2 bg-white" /></div>
      <div className="flex h-10 items-center pl-[17px]">
        <Icon w={13} h={13} sw={1.500}><path d="M1 12 12 1M1.500 1H12v11" /></Icon>
        <span className="ml-[16px] mt-[3px]">Get data</span>
      </div>
    </nav>
  );
}

const LEGEND = [
  { name: "Accessories", dot: "bg-[#2b66ff]", w: "w-[85px]" },
  { name: "Bikes", dot: "bg-[#3a00a8]", w: "w-[49px]" },
  { name: "Clothing", dot: "bg-[#ff6a00]", w: "w-[68px]" },
  { name: "Components", dot: "bg-[#80007f]", w: "w-[90px]" },
];
const ROWS = [
  ["United States", "$68,100", "$4,703,127", "$167,577", "$1,236,452"],
  ["Canada", "$25,277", "$1,232,210", "$61,456", "$358,191"],
  ["France", "$13,711", "$699,176", "$28,364", "$242,531"],
  ["United Kingdom", "$12,055", "$627,060", "$26,189", "$182,324"],
  ["Germany", "$12,113", "$444,332", "$24,056", "$108,828"],
  ["Australia", "$8,724", "$377,906", "$15,843", "$77,547"],
];

function DataTable() {
  return (
    <div className="w-[411px] text-[12.400px] text-[#252423]">
      <div className="grid h-[33px] grid-cols-[108px_79px_74px_64px_81px] items-center border-b border-[#2f6bff] pl-[5px]">
        <span className="tracking-[0.080px]">Country</span><span className="tracking-[0.080px]">Accessories</span><span>Bikes</span><span className="tracking-[0.150px]">Clothing</span><span className="tracking-[0.130px]">Components</span>
      </div>
      {ROWS.map((r, i) => (
        <div key={r[0]} className={"grid h-[19px] grid-cols-[108px_79px_74px_64px_86px] text-right " + (i % 2 ? "bg-[#eeeeee]" : "bg-white")}>
          <span className="h-[19px] whitespace-nowrap border-r border-[#2f6bff] pl-[5px] text-left leading-[22px] tracking-[0.170px]">{r[0]}</span>
          {r.slice(1).map((v) => <span key={v} className="h-[19px] pr-[5px] leading-[22px]">{v}</span>)}
        </div>
      ))}
    </div>
  );
}

function ReportArea() {
  return (
    <main className="flex w-[1018px] shrink-0 flex-col bg-white">
      <div className="flex h-[72px]">
        <div className="flex pl-[14px] pt-[20px]">
          <div className="flex h-10 w-[111px] items-center rounded-[4px] border-2 border-black pl-[2px] text-[11.900px] tracking-[-0.250px] text-[#605e5c]">
            <Icon w={9} h={16} c="#444"><path d="M8.300 1 1 8l7.300 7" /></Icon>
            <span className="ml-[16px] mt-[2px] whitespace-nowrap">Back to report</span>
          </div>
          <div className="ml-[14px] mt-[8px] h-[30px] w-px bg-[#8c8a88]" />
          <span className="ml-[15px] mt-[13px] w-[55px] font-['Roboto',sans-serif] text-[11px] font-semibold tracking-[0.600px] text-[#333]">SALES</span>
          <span className="mt-[13px] w-[600px] font-['Roboto',sans-serif] text-[10.600px] font-medium tracking-[0.450px] text-[#666]">BY COUNTRY AND CATEGORY</span>
        </div>
        <div className="ml-auto flex w-[133px] items-start pt-[5px]">
          <Icon w={16} h={17} c="#6b6470" className="mr-[13px]"><path d="M9.500 1.500 15 7l-2 .5-3.500 3.500-.5 3L3 8l3-.5L9 4zM5.500 11 .8 15.800" /></Icon>
          <Icon w={15} h={17} c="#dfb4d3" className="mr-[11px]"><path d="M4.500 12H.7V.700h6l3 3V4M4.500 4.500h6l3.800 3.800v7.500H4.500zM10.500 4.500v4h3.800" /></Icon>
          <Icon w={17} h={16} c="#6b5a72" className="mr-[11px]"><path d="M.8 1h15.400L10 8.500v6H7v-6z" /></Icon>
          <Icon w={17} h={17} c="#7a6480" className="mr-[12px]"><path d="M4 1h6.500v10H4z" stroke="#a030a0" strokeWidth="1.200" /><path d="M12 1.500h4.500v6H12" strokeDasharray="1 1" stroke="#b44cb0" /><path d="M.8 9c0 8 12 8.500 15 4M16 15.500v-3.500h-3.500" /></Icon>
          <svg width="16" height="2" className="mt-[7px]" fill="#7a6480"><rect width="2" height="2" /><rect x="7" width="2" height="2" /><rect x="13" width="2" height="2" /></svg>
        </div>
      </div>
      <div className="flex h-[22px] items-center pb-[5px] pl-[5px] text-[12.700px] tracking-[-0.050px] text-[#605e5c]">
        <span className="w-[66px] font-bold tracking-[0.050px]">Category</span>
        {LEGEND.map((l) => (
          <span key={l.name} className={"flex items-center whitespace-nowrap " + l.w}><i className={"mr-[2px] h-[10px] w-[10px] shrink-0 rounded-full " + l.dot} />{l.name}</span>
        ))}
      </div>
      <div className="h-[229px] pl-[5px]"><WorldMap /></div>
      <div className="flex-1 bg-[#a6a6a6] px-[10px] pt-[10px]"><div className="h-full bg-white pl-[5px]"><DataTable /></div></div>
    </main>
  );
}

function FilterPane() {
  return (
    <aside className="flex-1 border-l border-[#b3b0ad] bg-white text-[#252423]">
      <div className="h-[80px] border-b border-[#b3b0ad]">
        <div className="flex h-[39px] items-center pl-[12px]">
          <Icon w={17} h={16} sw={1.400}><path d="M1 1h15L10.500 8v6.500h-4V8z" /></Icon>
          <span className="ml-[7px] w-[141px] text-[14.800px] font-semibold tracking-[-0.080px]">Filters</span>
          <Icon w={13} h={13} sw={1.200}><path d="M1 .8 6.500 6.500 1 12.200M6.500.8 12 6.500 6.500 12.200" /></Icon>
        </div>
        <div className="ml-2 mt-[6px] flex h-[30px] w-[180px] items-center rounded-[2px] border border-[#a8a5a2] pl-[10px] text-[12.400px]">
          <SearchGlass s={16} /><span className="ml-[13px]">Search</span>
        </div>
      </div>
      <div className="flex h-[41px] items-center pl-2 pt-[10px] text-[11.300px]">
        <span className="w-[169px] whitespace-nowrap">Filters on this visual</span>
        <svg width="11" height="2" fill="#857a78" className="mt-[2px]"><rect width="1.500" height="1.500" /><rect x="4.500" width="1.500" height="1.500" /><rect x="9" width="1.500" height="1.500" /></svg>
      </div>
      <div className="flex flex-col gap-[6px] pl-2">
        {["Category", "Country", "Sales"].map((f) => (
          <div key={f} className="flex h-[42px] w-[184px] rounded-[2px] border border-[#c8c6c4] pl-[8px] pt-[5px] text-[11.400px] leading-4">
            <span className="w-[130px]">{f}<br />is (All)</span>
            <span className="mt-[3px]"><ChevronDown c="#3f74ac" /></span>
            <Icon w={13} h={12} c="#b3abae" className="ml-[9px] mt-px"><path d="M8 .800 12.200 5 6.500 10.700H4L.800 7.500zM4 4.300l4.500 4.500M4 10.700h8" /></Icon>
          </div>
        ))}
      </div>
    </aside>
  );
}

function StatusBar() {
  return (
    <div className="flex h-6 items-center border-t border-[#e3dcdf] bg-[#f8f1f6] pb-px text-[12px] text-[#605e5c]">
      <span className="ml-[998px] h-[2px] w-[5px] bg-[#605e5c]" />
      <Icon w={100} h={12} c="#605e5c" className="ml-[4px]"><path d="M0 6.500h100" /><path d="M50 1v11" strokeWidth="4" /></Icon>
      <Icon w={8} h={8} c="#605e5c" className="ml-[6px]" sw={1.300}><path d="M4 0v8M0 4h8" /></Icon>
      <span className="ml-[17px] w-[42px] tracking-[-0.500px]">100%</span>
      <Icon w={16} h={12} c="#605e5c"><path d="M.5.500h15v11H.5z" stroke="#7a4a7a" /><path d="M3 5V3h2M11 3h2v2M3 7.500V9.500h2M11 9.500h2V7.500" /></Icon>
    </div>
  );
}

function Taskbar() {
  return (
    <div className="flex h-10 shrink-0 items-stretch bg-black text-white">
      <div className="flex w-12 items-center justify-center"><svg width="16" height="16" viewBox="0 0 16 16" fill="#fff"><path d="M0 2.200 6.500 1.300v6.200H0zM7.400 1.200 16 0v7.500H7.400zM0 8.400h6.500v6.300L0 13.800zM7.400 8.400H16V16l-8.600-1.200z" /></svg></div>
      <div className="flex w-12 items-center justify-center"><SearchGlass c="#fff" s={16} /></div>
      <div className="flex w-12 items-center justify-center"><Icon w={16} h={16} c="#fff" sw={2}><circle cx="8" cy="8" r="6.700" /></Icon></div>
      <div className="mr-[3px] flex w-12 items-center justify-center"><Icon w={16} h={16} c="#fff" sw={1.200}><path d="M1 .5v2h10v-2M1 5h10v6.500H1zM1 16v-2h10v2M14.500.5v3M14.500 8v8" /><path d="M13 5h3v2.500h-3z" fill="#fff" stroke="none" /></Icon></div>
      <div className="flex w-12 items-center justify-center border-b-2 border-[#66aef0] bg-[#333]">
        <svg width="24" height="24" viewBox="0 0 24 24">
          <defs>
            <linearGradient id="e1" x1="0" y1="0.200" x2="1" y2="0.600"><stop offset="0" stopColor="#1d9be8" /><stop offset=".5" stopColor="#18c0d0" /><stop offset="1" stopColor="#3fe050" /></linearGradient>
            <linearGradient id="e2" x1="0" y1="0" x2="1" y2="1"><stop offset="0" stopColor="#1a86e0" /><stop offset="1" stopColor="#0d4fb0" /></linearGradient>
          </defs>
          <path fill="url(#e1)" d="M.300 10.500C1.200 4.300 6 0 12.200 0 19 0 24 4.800 24 10.200c0 4-3 6.300-6.300 6.300-2.700 0-3.900-1-3.900-1.700 0-.8 1.100-1 1.100-3.200 0-2.300-2.500-4.600-6-4.600-4 0-7 1.500-8.600 3.500z" />
          <path fill="url(#e2)" d="M.300 10.500C2 7.600 5.500 6.500 8.900 7c2 .3 3.600 1.300 4.500 2.500C9 9.500 7.500 13 8 16c.8 4.500 5 7.500 9 6.800A12 12 0 0 1 0 12c0-.500.100-1 .300-1.500z" />
          <path fill="#123c96" d="M8.500 13.500c.300 4.500 5 8 13 4.800-1 2.300-4.300 5-9 5C8.500 22 6.800 17.500 8.500 13.500z" />
        </svg>
      </div>
      <div className="mx-[5px] flex w-10 items-center justify-center border-b-2 border-[#66aef0]">
        <svg width="22" height="19" viewBox="0 0 22 19"><path fill="#e89b10" d="M0 0h8l2 2.500H0z" /><path fill="#ffe06a" d="M0 3h22v15.500H0z" /><path fill="#2f86e0" d="M4 18.500V11c0-1 .5-1.500 1.500-1.500h11c1 0 1.500.5 1.500 1.500v7.500h-4v-4H8v4z" /></svg>
      </div>
      <div className="flex w-12 items-center justify-center">
        <svg width="22" height="23" viewBox="0 0 22 23"><path fill="#f7d416" d="M2 3v10.500c0 3 12 3 12 0V3z" /><path fill="#fbe95c" d="M2 3h5v12.500c-3 0-5-.8-5-2z" /><ellipse cx="8" cy="3" rx="6" ry="2.700" fill="#f0a63a" /><path d="M16 1.500h5v5M1 17v5h5" stroke="#18a34a" strokeWidth="2" fill="none" /><path d="M10.500 12.500l9 8.500M20 12.500 10.500 21M9 12l3-1M18 10.500v3h3.500" stroke="#1d50b8" strokeWidth="2" fill="none" /></svg>
      </div>
      <div className="flex w-[49px] items-center justify-center">
        <svg width="19" height="24" viewBox="0 0 19 24"><path fill="#dc9a06" d="M11 0h8v24h-8z" /><path fill="#f5c41a" d="M5.500 6H13v18H5.500z" /><path fill="#fbe774" d="M0 12h8v12H0z" /></svg>
      </div>
      <div className="flex w-[51px] items-center justify-center">
        <svg width="21" height="24" viewBox="0 0 21 24"><path fill="#f5cf1c" d="M5 0h13v21H0V5z" /><path fill="#fdf0a0" d="M5 0v5H0z" /><path fill="#d98f06" d="M14 6.500h6V24h-6z" /><path fill="#f3c01a" d="M11 11h6v13h-6z" /><path fill="#fbe774" d="M8 16h6v8H8z" /></svg>
      </div>
      <div className="ml-auto flex items-center text-[11.500px] tracking-[-0.200px]">
        <span className="mb-[4px] w-[31px]">EN</span>
        <Icon w={13} h={8} c="#fff" sw={1.300}><path d="M.8 7 6.500 1.200 12.200 7" /></Icon>
        <Icon w={17} h={14} c="#fff" className="ml-[8px]"><path d="M.5.500h4v4h-4zM2.500 4.500V9.500h2M5 1.500h11v8H4.500M10 9.500v3M6.500 12.700h7.500" /></Icon>
        <div className="ml-[5px] w-[61px] text-center leading-[18px]">8:59 AM<br />6/17/2022</div>
        <div className="ml-[2px] h-full w-px bg-[#5a5a5a]" />
        <div className="w-1" />
      </div>
    </div>
  );
}

export default function App() {
  return (
    <div className="h-[928px] w-[1481px] overflow-hidden bg-[#444444] pl-[23px] pt-[25px] font-['Open_Sans','Noto_Sans',sans-serif]">
      <div className="flex h-[900px] w-[1440px] flex-col">
        <TabBar />
        <AddressBar />
        <div className="flex h-[35px] items-center border-b border-[#d0d0d0] bg-[#f7f7f7] pb-[4px] pl-[14px] text-[11.500px] tracking-[-0.130px] text-[#151515]">
          <MsLogo /><span className="ml-[9px] mt-px">Power BI Service</span>
        </div>
        <Header />
        <div className="flex min-h-0 flex-1">
          <Sidebar />
          <div className="flex min-w-0 flex-1 flex-col">
            <CommandBar />
            <div className="flex h-[59px] items-center bg-[#383838] pl-[20px] text-[13.250px] text-white">
              <span className="mt-[4px] w-[215px] whitespace-nowrap text-[13.500px] font-semibold tracking-[0.150px]">We updated the look of reports</span>
              <span className="mt-[4px] w-[827px] whitespace-nowrap tracking-[0.020px]">Take a tour, and we'll show you how to get around.</span>
              <button className="-mt-[2px] h-8 w-[109px] rounded-[2px] bg-[#f8d900] pt-px text-[13px] font-semibold text-[#151515]">Start tour</button>
              <Icon w={13} h={13} c="#fff" sw={1.400} className="-mt-[2px] ml-[18px]"><path d="M.7.7l11.600 11.600M12.300.7.7 12.300" /></Icon>
            </div>
            <div className="flex min-h-0 flex-1"><ReportArea /><FilterPane /></div>
            <StatusBar />
          </div>
        </div>
        <Taskbar />
      </div>
    </div>
  );
}
